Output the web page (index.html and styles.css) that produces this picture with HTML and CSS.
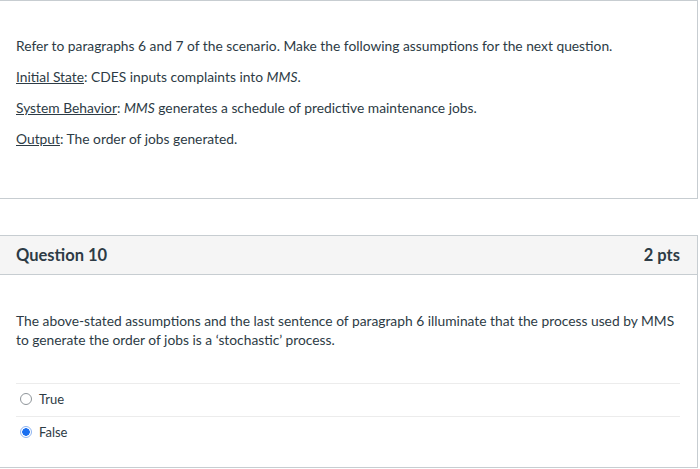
FILE: index.html
```html
<!DOCTYPE html>
<html>
<head>
<meta charset="utf-8">
<link rel="stylesheet" href="styles.css">
</head>
<body>
<div class="card intro">
  <p>Refer to paragraphs 6 and 7 of the scenario. Make the following assumptions for the next question.</p>
  <p><span class="u">Initial State</span>: CDES inputs complaints into <em>MMS</em>.</p>
  <p><span class="u">System Behavior</span>: <em>MMS</em> generates a schedule of predictive maintenance jobs.</p>
  <p><span class="u">Output</span>: The order of jobs generated.</p>
</div>
<div class="card question">
  <div class="qheader">
    <span class="qtitle">Question 10</span>
    <span class="qpts">2 pts</span>
  </div>
  <div class="qbody">
    <p class="qtext">The above-stated assumptions and the last sentence of paragraph 6 illuminate that the process used by MMS to generate the order of jobs is a ‘stochastic’ process.</p>
    <div class="answers">
      <label class="answer"><span class="radio"></span><span>True</span></label>
      <label class="answer"><span class="radio checked"></span><span>False</span></label>
    </div>
  </div>
</div>
</body>
</html>
```
FILE: styles.css
```css
html, body {
  margin: 0;
  padding: 0;
  background: #fff;
}
body {
  font-family: Lato, "Noto Sans", sans-serif;
  color: #2d3b45;
  font-size: 13.8px;
}
.card {
  border: 1px solid #c7cdd1;
  margin: 0 2px 0 -1px;
  background: #fff;
}
.intro {
  padding: 35px 16px 38px 16px;
  height: 124px;
}
.intro p {
  margin: 0 0 11px;
  line-height: 20px;
}
.u { text-decoration: underline; }
.question {
  margin-top: 36px;
}
.qheader {
  display: flex;
  justify-content: space-between;
  align-items: center;
  height: 38px;
  padding: 0 17px 0 16px;
  background: #f5f5f5;
  border-bottom: 1px solid #c7cdd1;
  font-weight: bold;
  font-size: 16.5px;
}
.qbody {
  padding: 36px 17px 18px 16px;
}
.qtext {
  margin: 0;
  line-height: 19px;
}
.answers {
  margin-top: 34px;
}
.answer {
  display: flex;
  align-items: center;
  gap: 7px;
  height: 30px;
  padding: 0 0 2px 4px;
  border-top: 1px solid #ececec;
  font-size: 13px;
}
.radio {
  width: 10px;
  height: 10px;
  border: 1px solid #8f959a;
  border-radius: 50%;
  box-sizing: content-box;
  display: inline-block;
}
.radio.checked {
  border-color: #8fb4f0;
  background: radial-gradient(circle, #1a6ff0 0 3.5px, #fff 4px);
}
```
